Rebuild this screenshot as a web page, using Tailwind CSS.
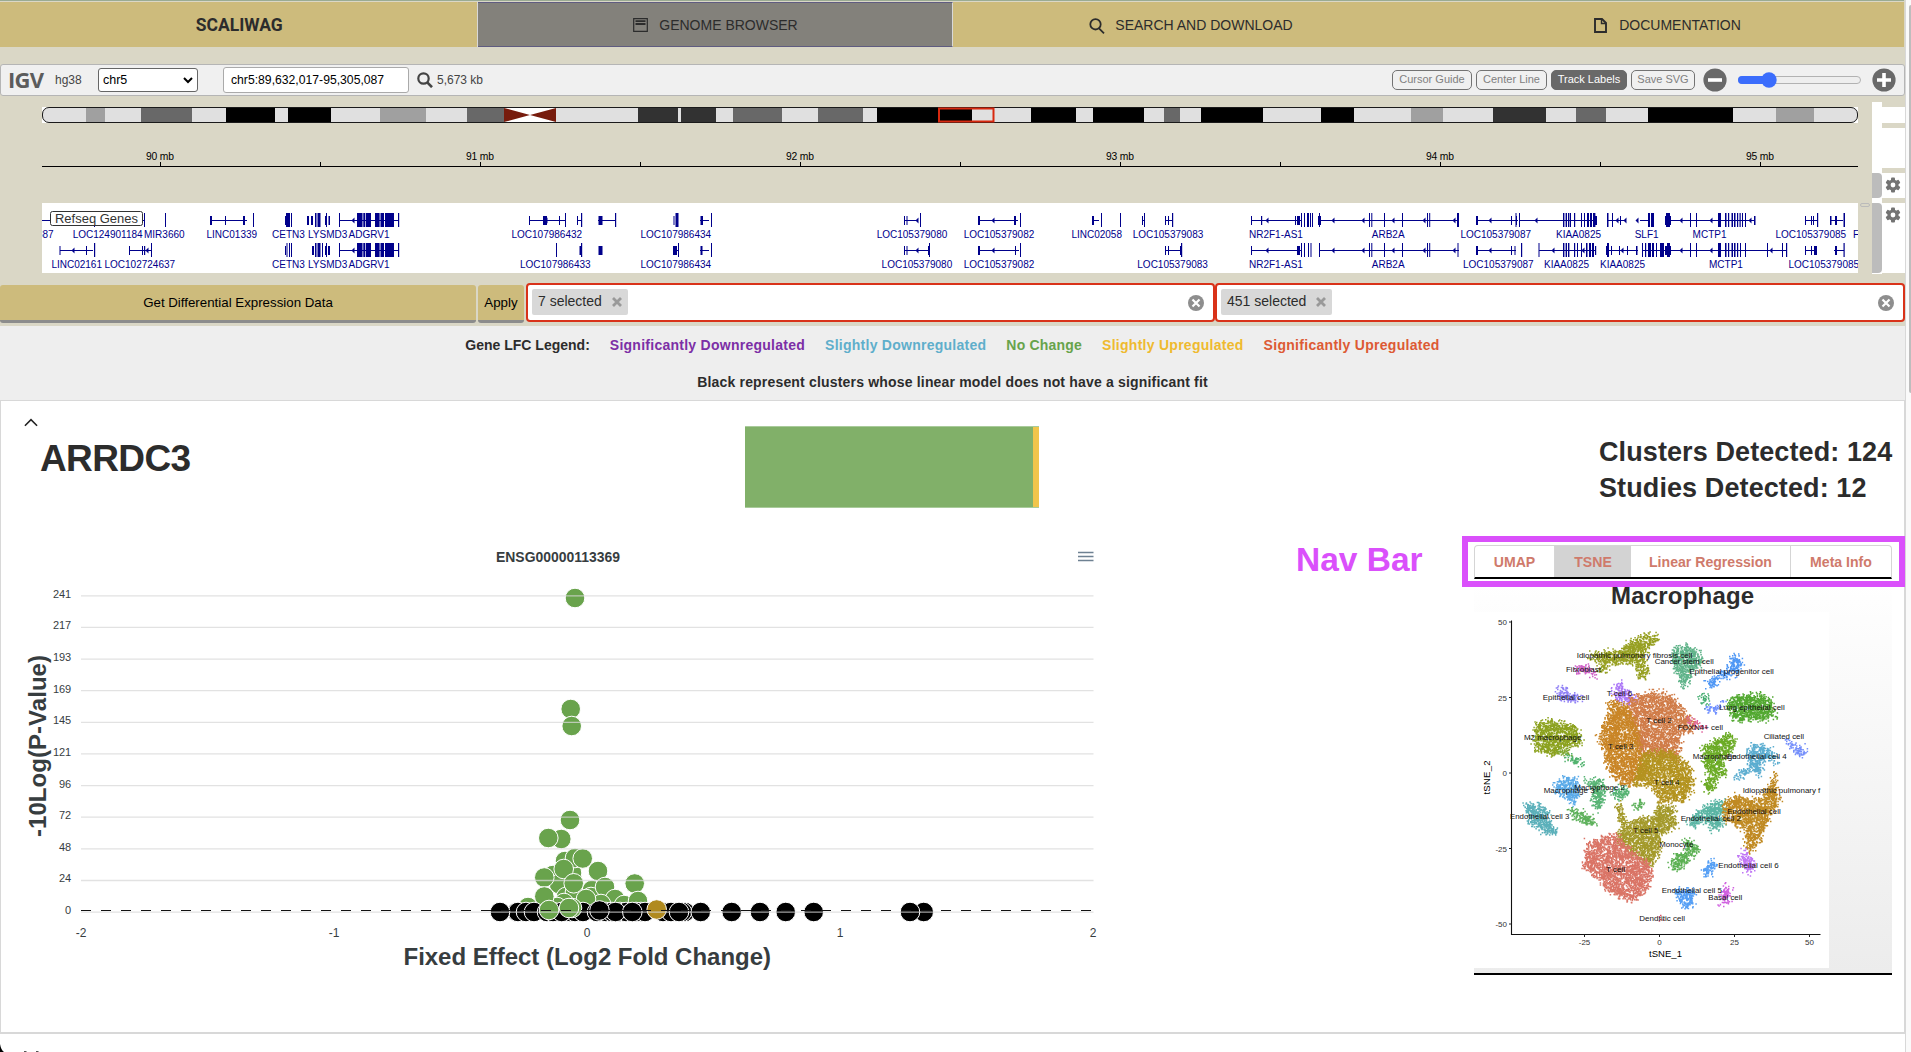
<!DOCTYPE html>
<html lang="en">
<head>
<meta charset="utf-8">
<title>SCALIWAG</title>
<script src="https://cdn.jsdelivr.net/npm/@tailwindcss/browser@4"></script>
</head>
<body class="flex h-[1052px] w-[1911px] overflow-hidden bg-white font-['Liberation_Sans',Arial,sans-serif] text-[#2c2c2c]">
<main class="relative flex h-full w-[1905px] shrink-0 flex-col overflow-hidden">
  <section class="flex h-[326px] shrink-0 flex-col bg-[#dad7c6]">
    <nav class="flex h-[47px] w-[1904px] border-t border-[#9aab93] pt-px text-[14px] font-medium">
      <a class="flex w-[478px] items-center justify-center border-r border-[#d8d8d8] bg-[#cdbb7c] pt-[2px] pl-px text-[19px] font-bold"><span class="scale-x-[0.92] font-[Roboto]">SCALIWAG</span></a>
      <a class="flex w-[475px] items-center justify-center gap-[11px] border-y border-r border-y-[#5f5c80] border-r-[#d8d8d8] bg-[#83817b] pt-px pl-px">
        <svg width="15" height="14" viewBox="0 0 15 14" fill="none" stroke="#2c2c2c"><path d="M.7.7h13.6v12.6H.7z" stroke-width="1.2"/><path d="M2.5 3.2h10M2.5 6h10" stroke-width="1.8"/></svg>
        <span>GENOME BROWSER</span></a>
      <a class="flex w-[476px] items-center justify-center gap-[10px] bg-[#cdbb7c] pt-[2px]">
        <svg width="16" height="16" viewBox="0 0 16 16" fill="none" stroke="#2c2c2c" stroke-width="1.8"><circle cx="6.5" cy="6.3" r="5.2"/><path d="M10 10.3l5 5"/></svg>
        <span>SEARCH AND DOWNLOAD</span></a>
      <a class="flex w-[475px] items-center justify-center gap-[12px] bg-[#cdbb7c] pt-[2px] pl-[2px]">
        <svg width="13" height="15" viewBox="0 0 13 15" fill="none" stroke="#2c2c2c" stroke-width="1.9"><path d="M1 1h7l4 4v9H1z"/><path d="M7.5 1v4.5H12" stroke-width="1.4"/></svg>
        <span>DOCUMENTATION</span></a>
    </nav>

    <div class="mt-[17px] flex h-8 w-[1905px] shrink-0 items-center rounded-[3px] border border-[#b5b5b5] bg-[#f0f0f0] text-[12.5px] text-[#444]">
      <span class="ml-[7px] w-[47px] pb-[2px] font-['Open_Sans'] text-[22px] font-bold tracking-[-0.7px] text-[#5c5c5c]">IGV</span>
      <span class="w-[43px] text-[12px]">hg38</span>
      <div class="flex h-6 w-[100px] items-center justify-between rounded-[3px] border border-[#666] bg-white px-1 text-[12.5px] text-black"><span>chr5</span>
        <svg width="10" height="7" viewBox="0 0 10 7" fill="none" stroke="#000" stroke-width="2"><path d="M1 1l4 4 4-4"/></svg></div>
      <div class="ml-[25px] flex h-[26px] w-[186px] items-center rounded-[3px] border border-[#aaa] bg-white px-[7px] text-[12.2px] text-black"><span class="whitespace-nowrap">chr5:89,632,017-95,305,087</span></div>
      <svg class="ml-2 shrink-0" width="16" height="16" viewBox="0 0 16 16" fill="none" stroke="#444"><circle cx="6.5" cy="6.5" r="5.2" stroke-width="2.2"/><path d="M10 10.2l5 5" stroke-width="2.6"/></svg>
      <span class="ml-1 text-[12px]">5,673 kb</span>
      <div class="mr-[7px] ml-auto flex items-center text-[11px] text-[#808080]">
        <span class="flex h-5 w-[80px] items-center justify-center rounded-[5px] border border-[#737373] pb-px">Cursor Guide</span>
        <span class="ml-1 flex h-5 w-[71px] items-center justify-center rounded-[5px] border border-[#737373] pb-px">Center Line</span>
        <span class="ml-1 flex h-5 w-[76px] items-center justify-center rounded-[5px] border border-[#696969] bg-[#696969] pb-px text-white">Track Labels</span>
        <span class="ml-1 flex h-5 w-[64px] items-center justify-center rounded-[5px] border border-[#737373] pb-px">Save SVG</span>
        <svg class="ml-2" width="194" height="24" viewBox="0 0 194 24"><circle cx="12" cy="12" r="11.6" fill="#696969"/><path d="M5 12h14" stroke="#fff" stroke-width="3.6"/><rect x="35.5" y="8.5" width="122" height="7" rx="3.5" fill="#eee" stroke="#b2b2b2"/><path d="M35 12a4 4 0 0 1 4-4h26v8H39a4 4 0 0 1-4-4z" fill="#3b6dfc"/><circle cx="66" cy="12" r="7.7" fill="#3b6dfc"/><circle cx="181" cy="12" r="11.6" fill="#696969"/><path d="M174 12h14M181 5v14" stroke="#fff" stroke-width="3.6"/></svg>
      </div>
    </div>

    <svg class="block h-[187px] w-[1905px] shrink-0" viewBox="0 96 1905 187" font-family="Liberation Sans, Arial, sans-serif">
      <defs>
        <clipPath id="ideoClip"><rect x="42" y="107" width="1816" height="16" rx="7"/></clipPath>
        <clipPath id="trackClip"><rect x="42" y="203" width="1816" height="70"/></clipPath>
      </defs>
      <rect x="42" y="107" width="6" height="16" fill="#fff"/><rect x="1852" y="107" width="6" height="16" fill="#fff"/>
      <g id="bands" clip-path="url(#ideoClip)"></g>
      <rect x="42.5" y="107.5" width="1815" height="15" rx="6.5" fill="none" stroke="#1a1a1a"/>
      <rect x="939" y="108.5" width="54.5" height="13" fill="none" stroke="#d8290f" stroke-width="2"/>
      <g id="ruler" font-size="10.3" text-anchor="middle"></g>
      <rect x="42" y="203" width="1816" height="70" fill="#fff"/>
      <g id="genes" clip-path="url(#trackClip)" fill="#00008b" font-size="10"></g>
      <rect x="50.5" y="211.5" width="92" height="14" rx="2" fill="#fff" stroke="#333"/>
      <text x="55" y="223" font-size="12.500" fill="#333" textLength="83" lengthAdjust="spacingAndGlyphs">Refseq Genes</text>
      <g fill="#fff"><rect x="1872" y="102" width="10" height="172"/><rect x="1882" y="107" width="23" height="16"/><rect x="1882" y="128" width="23" height="40"/><rect x="1882" y="173" width="23" height="25"/><rect x="1882" y="203" width="23" height="70"/></g>
      <path d="M1872 173h6a4 4 0 0 1 4 4v17a4 4 0 0 1-4 4h-6zM1872 203h6a4 4 0 0 1 4 4v62a4 4 0 0 1-4 4h-6z" fill="#bcbcbc"/>
      <rect x="1860.5" y="203.5" width="9" height="3" rx="1.5" fill="none" stroke="#bbb"/>
      <g id="gears" fill="#737373"></g>
    </svg>

    <div class="flex h-[43px] items-start text-[14px]">
      <button class="mt-[2px] flex h-[38px] w-[476px] items-center justify-center rounded-[3px] border-b-[3px] border-[#8c8c8c] bg-[#cdbb7c] text-[13.3px] text-black">Get Differential Expression Data</button>
      <button class="mt-[2px] ml-[2px] flex h-[38px] w-[46px] items-center justify-center rounded-[3px] border-b-[3px] border-[#8c8c8c] bg-[#cdbb7c] text-[13.3px] text-black">Apply</button>
      <div class="ml-[2px] flex h-[39px] w-[689px] items-center justify-between rounded-[4px] border-2 border-[#d93219] bg-white pr-[9px] pl-1">
        <span class="flex h-[26px] items-center gap-[10px] self-start mt-1 rounded-[2px] bg-[#d8d8d8] px-[6px] pb-px">7 selected <svg width="10" height="10" viewBox="0 0 10 10" stroke="#999" stroke-width="2.8"><path d="M1 1l8 8M9 1l-8 8"/></svg></span>
        <svg width="16" height="16" viewBox="0 0 16 16"><circle cx="8" cy="8" r="8" fill="#8e8e8e"/><path d="M4.5 4.5l7 7M11.5 4.5l-7 7" stroke="#fff" stroke-width="2.2"/></svg>
      </div>
      <div class="flex h-[39px] w-[690px] items-center justify-between rounded-[4px] border-2 border-[#d93219] bg-white pr-[9px] pl-1">
        <span class="flex h-[26px] items-center gap-[10px] self-start mt-1 rounded-[2px] bg-[#d8d8d8] px-[6px] pb-px">451 selected <svg width="10" height="10" viewBox="0 0 10 10" stroke="#999" stroke-width="2.8"><path d="M1 1l8 8M9 1l-8 8"/></svg></span>
        <svg width="16" height="16" viewBox="0 0 16 16"><circle cx="8" cy="8" r="8" fill="#8e8e8e"/><path d="M4.5 4.5l7 7M11.5 4.5l-7 7" stroke="#fff" stroke-width="2.2"/></svg>
      </div>
    </div>
  </section>

  <section class="flex h-[74px] shrink-0 flex-col items-center bg-[#eee] pt-[9px] text-[14px] font-bold">
    <div class="flex h-[20px] items-center gap-5 whitespace-nowrap">
      <span>Gene LFC Legend:</span>
      <span class="tracking-[0.26px] text-[#7c2fa6]">Significantly Downregulated</span>
      <span class="tracking-[0.26px] text-[#5faecb]">Slightly Downregulated</span>
      <span class="tracking-[0.2px] text-[#67a34b]">No Change</span>
      <span class="tracking-[0.27px] text-[#efba2f]">Slightly Upregulated</span>
      <span class="tracking-[0.29px] text-[#dd5a34]">Significantly Upregulated</span>
    </div>
    <div class="mt-[17px] h-[20px] leading-5 tracking-[0.18px]">Black represent clusters whose linear model does not have a significant fit</div>
  </section>

  <article class="flex h-[634px] shrink-0 flex-col border border-b-2 border-[#d8d8d8] bg-white">
    <header class="flex h-[134px] shrink-0 justify-between pr-3">
      <div class="w-[744px]">
        <svg class="mt-[17px] ml-[23px]" width="14" height="9" viewBox="0 0 15 9" fill="none" stroke="#222" stroke-width="1.7"><path d="M1 8l6.5-6.500L14 8"/></svg>
        <h1 class="mt-[9px] ml-[39px] text-[37px] leading-[46px] font-bold tracking-[-0.6px]">ARRDC3</h1>
      </div>
      <div class="mt-[25px] flex h-[82px] w-[294px] border-y border-[#a9cb9b]"><div class="w-[288px] bg-[#81b069]"></div><div class="w-[6px] bg-[#f0c54b]"></div></div>
      <div class="mt-[33px] ml-auto w-[293px] text-[27px] leading-[36px] font-bold tracking-[0.1px] whitespace-nowrap"><div>Clusters Detected: 124</div><div>Studies Detected: 12</div></div>
    </header>
    <div class="flex">
      <svg class="block h-[460px] w-[1120px] shrink-0" viewBox="1 535 1120 460" font-family="Liberation Sans, Arial, sans-serif" fill="#373d3f">
        <text x="496" y="562" font-size="14" font-weight="700" textLength="124" lengthAdjust="spacingAndGlyphs">ENSG00000113369</text>
        <path d="M1078 552.500h15.500M1078 556.500h15.500M1078 560.500h15.500" stroke="#6e8192" stroke-width="1.6"/>
        <g id="volcano"></g>
        <text x="403.500" y="965" font-size="24" font-weight="700" textLength="367.500">Fixed Effect (Log2 Fold Change)</text>
        <text transform="translate(46 837) rotate(-90)" font-size="24" font-weight="700" textLength="182">-10Log(P-Value)</text>
      </svg>
      <div class="w-[353px] pt-[7px] pl-[175px] text-[33.5px] leading-[36px] font-bold text-[#da50fb]"><span class="whitespace-nowrap">Nav Bar</span></div>
      <div class="relative h-[440px] w-[418px] pt-[10px]">
        <div class="flex h-[34px] rounded-t-[4px] border border-b-2 border-[#d5d5d5] border-b-black text-[14.100px] font-bold text-[#cf7a6b]">
          <span class="flex w-[80px] items-center justify-center border-r border-[#d5d5d5] pt-[2px]">UMAP</span>
          <span class="flex w-[76px] items-center justify-center bg-[#d3d3d3] pt-[2px]">TSNE</span>
          <span class="flex w-[160px] items-center justify-center border-r border-[#d5d5d5] pt-[2px]">Linear Regression</span>
          <span class="flex grow items-center justify-center pt-[2px]">Meta Info</span>
        </div>
        <div class="h-[396px] border-b-2 border-black bg-gradient-to-b from-white to-[#ececec]">
          <h2 class="h-[33px] pl-[137px] text-[24px] leading-[34px] font-bold tracking-[0.2px]">Macrophage</h2>
          <svg class="block bg-white" width="355" height="356" viewBox="1474 612 355 356" font-family="Liberation Sans, Arial, sans-serif">
            <g id="tsne"></g>
          </svg>
        </div>
        <div class="absolute top-[1px] -left-[12px] h-[51px] w-[443px] border-[6px] border-[#da50fb]"></div>
      </div>
    </div>
  </article>
  <footer class="flex h-[18px] items-end bg-white">
    <svg width="60" height="18" viewBox="0 0 60 18"><path d="M0 10q1 6 4 8H0z" fill="#000"/><path d="M24 17.500h2.500M36 17.500h2.500" stroke="#555"/></svg>
  </footer>
</main>
<aside class="flex h-full w-[6px] justify-end border-l border-[#d8d8d8] bg-[#fafafa] pt-[5px]"><div class="h-[388px] w-[2px] rounded-l bg-[#bdbdbd]"></div></aside>

<script>
const $ = id => document.getElementById(id);

// Chromosome bands: start, end, shade
const bands = [[42,86,'l'],[86,105,'a'],[105,141,'l'],[141,192,'m'],[192,226,'l'],[226,275,'k'],[275,288,'l'],[288,331,'k'],[331,380,'l'],[380,426,'a'],[426,467,'l'],[467,504,'m'],[504,556,'w'],[556,638,'l'],[638,678,'d'],[678,681,'l'],[681,716,'d'],[716,733,'l'],[733,782,'m'],[782,818,'l'],[818,863,'m'],[863,877,'l'],[877,972,'k'],[972,1031,'l'],[1031,1076,'k'],[1076,1093,'l'],[1093,1144,'k'],[1144,1164,'l'],[1164,1180,'m'],[1180,1201,'l'],[1201,1263,'k'],[1263,1321,'l'],[1321,1354,'k'],[1354,1411,'l'],[1411,1443,'a'],[1443,1493,'l'],[1493,1546,'d'],[1546,1576,'l'],[1576,1606,'m'],[1606,1648,'l'],[1648,1733,'k'],[1733,1776,'l'],[1776,1814,'a'],[1814,1858,'l']];
const shade = {l:'#e0e0e0',a:'#a0a0a0',m:'#686868',k:'#000',d:'#323232',w:'#fff'};
$('bands').innerHTML = bands.map(([a,b,c]) => `<rect x="${a}" y="107" width="${b-a}" height="16" fill="${shade[c]}"/>`).join('')
  + '<path d="M504 108L530 115L504 122zM556 108L530 115L556 122z" fill="#771c0d"/>';

let r = '<path d="M42 166.500H1858" stroke="#000"/>';
for (let i = 0; i <= 10; i++) {
  const x = 160.5 + i * 160;
  r += `<path d="M${x} 162V166" stroke="#000"/>`;
  if (i % 2 === 0) r += `<text x="${x-.5}" y="160" textLength="28">${90+i/2} mb</text>`;
}
$('ruler').innerHTML = r;

// Gene rows: lines [x1,x2], tall exons [x,w], short exons [x,w], arrows x
const rows = [
 {y:220,
  lines:[[42,145],[210,247],[339.6,398.5],[529.4,565],[577,581],[598,615],[700,709],[904,918],[978,1018],[1093,1099],[1142,1144],[1165,1172],[1251.5,1301],[1319,1459],[1476.7,1518],[1519,1563],[1563,1595],[1607,1626],[1640,1650],[1666,1755],[1805,1817],[1830,1843]],
  tall:[[94,1],[144,1],[165,1],[253,1],[286,4],[291,1],[315,1.5],[317.5,3],[326,1],[339,1],[357,5.5],[363.3,2],[366,5],[375,4.6],[380.5,3.5],[385,9],[398,1.2],[565,1],[581,1.2],[615,1.2],[675.5,3],[711,1],[920,1],[1020,1],[1101,1],[1120,1],[1144,1],[1172,1.2],[1301,1],[1304,1],[1307,2],[1310,1],[1312,1],[1319,1],[1369,1],[1371.3,1],[1384,1],[1402,1],[1427,1],[1429.2,1],[1457,2],[1519,1],[1515.5,1],[1563,1.4],[1565.6,1.4],[1568,1.4],[1570,1],[1574,1.2],[1581,1],[1584,1],[1587,2],[1590,2],[1593,2.4],[1607,1.5],[1612,1],[1648,2],[1651,3],[1666,4],[1690,1],[1696,1],[1718,3],[1725,1.5],[1728,1.2],[1731.500,1.500],[1734,1.500],[1737,1.200],[1739.500,1.200],[1742,1],[1745,1],[1817,1.2],[1843.500,1.500]],
  short:[[210,2],[225,1],[243,2],[285,1],[307,2],[311,2],[325,1.500],[328.500,1.500],[529,1],[543,4],[559,1],[577,1],[598.500,4],[673.500,1],[700.500,2.500],[904,1],[906.500,1],[978,2],[1014,2],[1092,2],[1142,1],[1165,1],[1168,1],[1251,1],[1261,1.2],[1295,1],[1297,3],[1318,3],[1476,2],[1511,1],[1516,1],[1595,2],[1620,1],[1665,6],[1754,1.5],[1805,1],[1811,1],[1813,1],[1830,1.500],[1835,2]],
  arrows:[353,546,917,993,1267,1333,1363,1393,1424,1454,1490,1536,1617,1625,1637,1681,1711,1750]},
 {y:250,
  lines:[[60,93],[129,151],[339.6,398.5],[673,678],[700,709],[904,929],[978,1019],[1165,1181],[1251.5,1301],[1319,1459],[1476.7,1516],[1539,1596],[1607,1638],[1642,1786],[1805,1817],[1834,1844]],
  tall:[[94,1.2],[151,1],[286.500,1],[289,1],[291,1],[315,1.500],[317.500,3],[322,1],[326,1],[339,1],[357,5.500],[363.300,2],[366,5],[375,4.600],[380.500,3.500],[385,9],[398,1.200],[556,1],[581,1.200],[678,1],[711,1],[929,1],[1020,1],[1181,1.200],[1301,1],[1304,1],[1308,1],[1310.500,1],[1319,1],[1369,1],[1371.300,1],[1384,1],[1402,1],[1427,1],[1429.200,1],[1457.500,1],[1521,1.200],[1538.500,1],[1563,1.400],[1565.600,1.400],[1568,1.400],[1574,1.200],[1577,1],[1581,1],[1586,1.500],[1589,2],[1592,2],[1607,2],[1642,1],[1645,1.200],[1648,3],[1652,2],[1656,1],[1660,4],[1667,3],[1690,1],[1696,1],[1718,3],[1725,1.500],[1728,1.200],[1731.500,1.500],[1734,1.500],[1737,1.200],[1740,1],[1745,1],[1767,1],[1782,1],[1786,1.200],[1843.500,1.200]],
  short:[[59.500,1],[86,1],[129,1],[142,1],[144,1.200],[285,1],[312,2],[325,2],[328,2],[579.500,2],[598.500,4],[673,4],[700.500,2],[904,1],[906.500,1],[928,2],[978,2],[1015,1],[1165,1],[1168,1],[1180,2],[1251,1],[1297,3],[1476,2],[1511,1],[1514.500,1],[1595,1.200],[1606,3],[1611,1],[1619,1],[1627,1],[1636,1.500],[1665,6],[1805,1],[1811,1],[1814,3],[1835,2]],
  arrows:[73,147,353,917,993,1267,1333,1363,1393,1424,1454,1490,1553,1583,1622,1681,1711,1771]}];
let g = '';
for (const R of rows) {
  for (const [a,b] of R.lines) g += `<rect x="${a}" y="${R.y}" width="${b-a}" height="1"/>`;
  for (const [x,w] of R.tall) g += `<rect x="${x}" y="${R.y-7}" width="${w}" height="14"/>`;
  for (const [x,w] of R.short) g += `<rect x="${x}" y="${R.y-4}" width="${w}" height="9"/>`;
  for (const x of R.arrows) g += `<path d="M${x-1.5} ${R.y+.5}l3-3v6z"/>`;
}
const names = [[[37,'387'],[72.7,'LOC124901184'],[144,'MIR3660'],[206.500,'LINC01339'],[272,'CETN3'],[308,'LYSMD3'],[348.500,'ADGRV1'],[511.500,'LOC107986432'],[640.500,'LOC107986434'],[876.700,'LOC105379080'],[963.700,'LOC105379082'],[1071.400,'LINC02058'],[1132.700,'LOC105379083'],[1249,'NR2F1-AS1'],[1371.800,'ARB2A'],[1460.400,'LOC105379087'],[1556,'KIAA0825'],[1634.700,'SLF1'],[1692.600,'MCTP1'],[1775.500,'LOC105379085'],[1853,'FAM81B']],
 [[51.400,'LINC02161'],[104.500,'LOC102724637'],[272,'CETN3'],[308,'LYSMD3'],[348.500,'ADGRV1'],[520,'LOC107986433'],[640.500,'LOC107986434'],[881.600,'LOC105379080'],[963.700,'LOC105379082'],[1137.300,'LOC105379083'],[1249,'NR2F1-AS1'],[1371.800,'ARB2A'],[1463,'LOC105379087'],[1544,'KIAA0825'],[1600,'KIAA0825'],[1709,'MCTP1'],[1788.500,'LOC105379085']]];
names.forEach((row, i) => row.forEach(([x,t]) => g += `<text x="${x}" y="${238+i*30}">${t}</text>`));
$('genes').innerHTML = g;

const gear = (cx,cy) => {
  let s = `<g transform="translate(${cx} ${cy})">`;
  for (let i = 0; i < 6; i++) s += `<rect x="-2" y="-7.500" width="4" height="5" rx="1" transform="rotate(${i*60})"/>`;
  return s + '<circle r="5.600"/><circle r="2.400" fill="#fff"/></g>';
};
$('gears').innerHTML = gear(1893,185) + gear(1893,215);

// Volcano plot
let v = '';
[241,217,193,169,145,121,96,72,48,24,0].forEach((n,i) => {
  const y = 595.8 + i * 31.63;
  v += `<text x="71" y="${y+2}" font-size="11" text-anchor="end" textLength="${String(n).length*6}">${n}</text>`;
});
[-2,-1,0,1,2].forEach((n,i) => v += `<text x="${81+i*253}" y="937" font-size="12" text-anchor="middle">${n}</text>`);
const dot = (x,y,c) => `<circle cx="${x}" cy="${y}" r="9.800" fill="${c}" stroke="#fff" stroke-width="1"/>`;
const G = '#69a34c', K = '#000';
[[528,907],[565,861],[553,875],[572,873],[559,884],[566,897],[575,892],[592,890],[564,903],[557,907],[591,897],[575,858],[570.700,709],[571.700,726],[561.300,839],[548.300,838],[570,820],[582.700,858.500],[563.700,869],[544.300,877.500],[544.300,896.500],[573.700,883.300],[598,871],[605,887],[634.700,883.500],[615,899],[601,904],[624,905],[638,901],[586,899],[575,598]].forEach(p => v += dot(...p,G));
[517,518,526,534,547,553,570,575,561.700,583,597,606,612,620,626,636,641,645].forEach(x => v += dot(x,912,K));
v += dot(572,908,G) + dot(549,910,G) + dot(569,908,G) + dot(615.500,912,K) + dot(599.500,910.500,K) + dot(632.300,912,K) + dot(500,912,K);
[663,671,685,682,679].forEach(x => v += dot(x,912,K));
v += dot(656.700,909.500,'#b08a1f');
[700.700,731.700,760,785.700,813.700,923.700,910].forEach(x => v += dot(x,912,K));
for (let i = 0; i <= 10; i++) { const y = 595.8 + i*31.63; v += `<path d="M81 ${y.toFixed(1)}H1093.500" stroke="#d8d8d8" stroke-opacity=".75" stroke-width="1.300"/>`; }
v += '<path d="M81 910.500H1093.500" stroke="#111" stroke-width="1.100" stroke-dasharray="10 10"/>';
$('volcano').innerHTML = v;

// t-SNE embedding; each cluster is an outline filled with points, in thirds of a pixel
let seed = 7;
const rnd = () => (seed = (seed * 1664525 + 1013904223) % 4294967296) / 4294967296;
const inside = (x,y,p) => { let c = false; for (let i = 0, j = p.length-1; i < p.length; j = i++) if ((p[i][1] > y) !== (p[j][1] > y) && x < (p[j][0]-p[i][0])*(y-p[i][1])/(p[j][1]-p[i][1])+p[i][0]) c = !c; return c; };
const clusters = [
['#97a022','440,408 500,396 545,395 560,375 610,345 650,345 650,365 620,385 605,410 625,440 612,480 595,470 590,430 555,425 505,435 490,455 475,460 480,425'],
['#5fb389','700,385 735,378 765,390 795,425 770,440 755,450 745,490 732,508 722,480 700,440'],
['#4f97f5','870,420 885,410 908,425 900,450 880,460 868,450'],
['#4f97f5','865,450 870,485 862,462 835,475 820,503 803,490 830,468'],
['#d063c8','408,445 435,438 465,455 470,468 445,460 415,458'],
['#9181f5','350,505 370,505 385,520 430,535 400,545 365,538'],
['#ac77f7','525,492 545,492 550,510 590,530 580,545 545,545 528,530'],
['#d07c48','580,530 650,515 690,530 730,570 765,610 750,635 720,640 715,720 600,700 580,620 565,570'],
['#c98526','510,540 560,560 585,600 600,690 620,760 560,800 515,770 490,690 478,640 500,600'],
['#b3931f','610,700 700,695 750,740 758,790 740,840 660,845 640,800 580,790 600,740'],
['#a3992a','540,850 560,910 590,900 640,890 655,860 700,860 705,920 660,945 660,990 635,1040 590,1010 530,960 545,920 530,860'],
['#da7466','440,970 520,940 545,965 630,1035 635,1070 615,1115 570,1145 500,1110 485,1080 430,1045 440,1000'],
['#52a830','870,530 960,520 1000,545 1005,590 960,598 880,598 865,560'],
['#45ad70','775,535 800,525 805,545 785,560 795,540'],
['#7090ff','795,545 825,565 855,540 830,572 797,576 808,565'],
['#8ca21f','285,620 325,600 365,610 415,625 420,680 370,685 340,705 300,690 285,690'],
['#7fa831','350,690 385,695 390,710 360,705'],['#52b36f','380,705 432,728 430,735 385,720'],
['#e0629c','745,597 800,625 790,632 755,610'],
['#758ffb','1035,660 1060,675 1095,690 1090,712 1070,695 1040,670'],
['#6bab25','790,680 870,640 885,665 870,700 840,720 860,760 830,770 820,810 800,815 795,780 815,770 790,730'],
['#5badd0','930,675 960,675 1000,690 1010,735 985,712 965,725 960,770 930,740 900,780 885,775 925,740'],
['#5aaae8','345,790 380,772 412,780 415,810 400,860 380,830 350,820'],
['#56b373','425,782 490,780 495,815 480,870 460,850 460,800'],['#56b373','515,815 550,800 565,830 530,835'],
['#5bb0ba','258,855 300,855 325,880 325,905 350,930 330,945 290,925 265,900'],
['#5cb05a','390,865 430,880 465,905 460,915 400,895'],['#5cb05a','580,860 605,840 600,870'],
['#5ab5a4','745,900 790,865 850,840 850,910 820,930 800,905 750,915'],
['#c08a22','1010,740 1005,800 1015,850 980,900 960,960 935,1000 915,970 920,930 860,900 850,850 880,830 960,840 990,800'],
['#c077f5','905,980 915,1010 925,1005 945,1035 930,1062 915,1050 905,1010'],
['#5bb052','735,955 780,985 745,1020 720,1050 695,1045 700,1010 740,990'],
['#559ff5','810,1022 835,1035 820,1042 810,1060 790,1072 795,1045'],
['#559ff5','705,1105 730,1115 765,1105 755,1150 740,1165 720,1150'],
['#d060e0','860,1093 868,1115 862,1150 845,1155 848,1110'],
['#d4506a','660,1178 672,1202 664,1200']];
let t = '<g transform="translate(1440 520) scale(.33333)">';
for (const [c,s] of clusters) {
  const p = s.split(' ').map(q => q.split(',').map(Number));
  const xs = p.map(q => q[0]), ys = p.map(q => q[1]);
  const x0 = Math.min(...xs)-8, x1 = Math.max(...xs)+8, y0 = Math.min(...ys)-8, y1 = Math.max(...ys)+8;
  let d = '';
  const n = (x1-x0)*(y1-y0)/(c === '#da7466' || c === '#d07c48' ? 11 : 10);
  for (let i = 0; i < n; i++) {
    const x = x0 + rnd()*(x1-x0), y = y0 + rnd()*(y1-y0);
    const jx = (rnd()+rnd()+rnd()-1.5)*12, jy = (rnd()+rnd()+rnd()-1.5)*12;
    if (inside(x,y,p)) d += `M${(x+jx-2).toFixed(0)} ${(y+jy-2).toFixed(0)}h4.500v4.500h-4.500z`;
  }
  t += `<path fill="${c}" d="${d}"/>`;
}
t += '</g><path d="M1511.500 620.500V934.500H1820.500" fill="none" stroke="#111" stroke-width="1.100"/><g font-size="8" fill="#333">';
[50,25,0,-25,-50].forEach((n,i) => { const y = 622+i*75.5; t += `<path d="M1509 ${y}h2.500" stroke="#222"/><text x="1507" y="${y+3}" text-anchor="end">${n}</text>`; });
[-25,0,25,50].forEach((n,i) => { const x = 1584.5+i*75; t += `<path d="M${x} 934.500v2.500" stroke="#222"/><text x="${x}" y="945" text-anchor="middle">${n}</text>`; });
t += '</g><text x="1649" y="957" font-size="9.500" textLength="33">tSNE_1</text><text transform="translate(1490 794.500) rotate(-90)" font-size="9.500" textLength="34">tSNE_2</text><g font-size="7.900" fill="#111">';
[[410,415,757,'Idiopathic pulmonary fibrosis cell'],[644,433,821,'Cancer stem cell'],[378,456,483,'Fibroblast'],[748,461,1001,'Epithelial progenitor cell'],[308,541,448,'Epithelial cell'],[500,527,577,'T cell 6'],[838,569,1034,'Lung epithelial cell'],[619,608,695,'T cell 2'],[713,629,849,'FOXN4+ cell'],[252,660,424,'M2 macrophage'],[971,657,1092,'Ciliated cell'],[504,686,580,'T cell 3'],[758,718,890,'Macrophage'],[860,718,1040,'Endothelial cell 4'],[311,818,464,'Macrophage 3'],[403,809,555,'Macrophage 2'],[642,794,718,'T cell 4'],[908,820,1141,'Idiopathic pulmonary f'],[862,881,1022,'Endothelial cell'],[722,902,903,'Endothelial cell 2'],[210,897,388,'Endothelial cell 3'],[580,940,655,'T cell 5'],[658,982,760,'Monocyte'],[498,1056,555,'T cell'],[835,1044,1016,'Endothelial cell 6'],[665,1120,846,'Endothelial cell 5'],[805,1141,907,'Basal cell'],[598,1203,735,'Dendritic cell']]
.forEach(([a,y,b,s]) => t += `<text x="${1440+a/3}" y="${520+y/3}" textLength="${(b-a)/3}" lengthAdjust="spacingAndGlyphs">${s}</text>`);
$('tsne').innerHTML = t + '</g>';
</script>
</body>
</html>
